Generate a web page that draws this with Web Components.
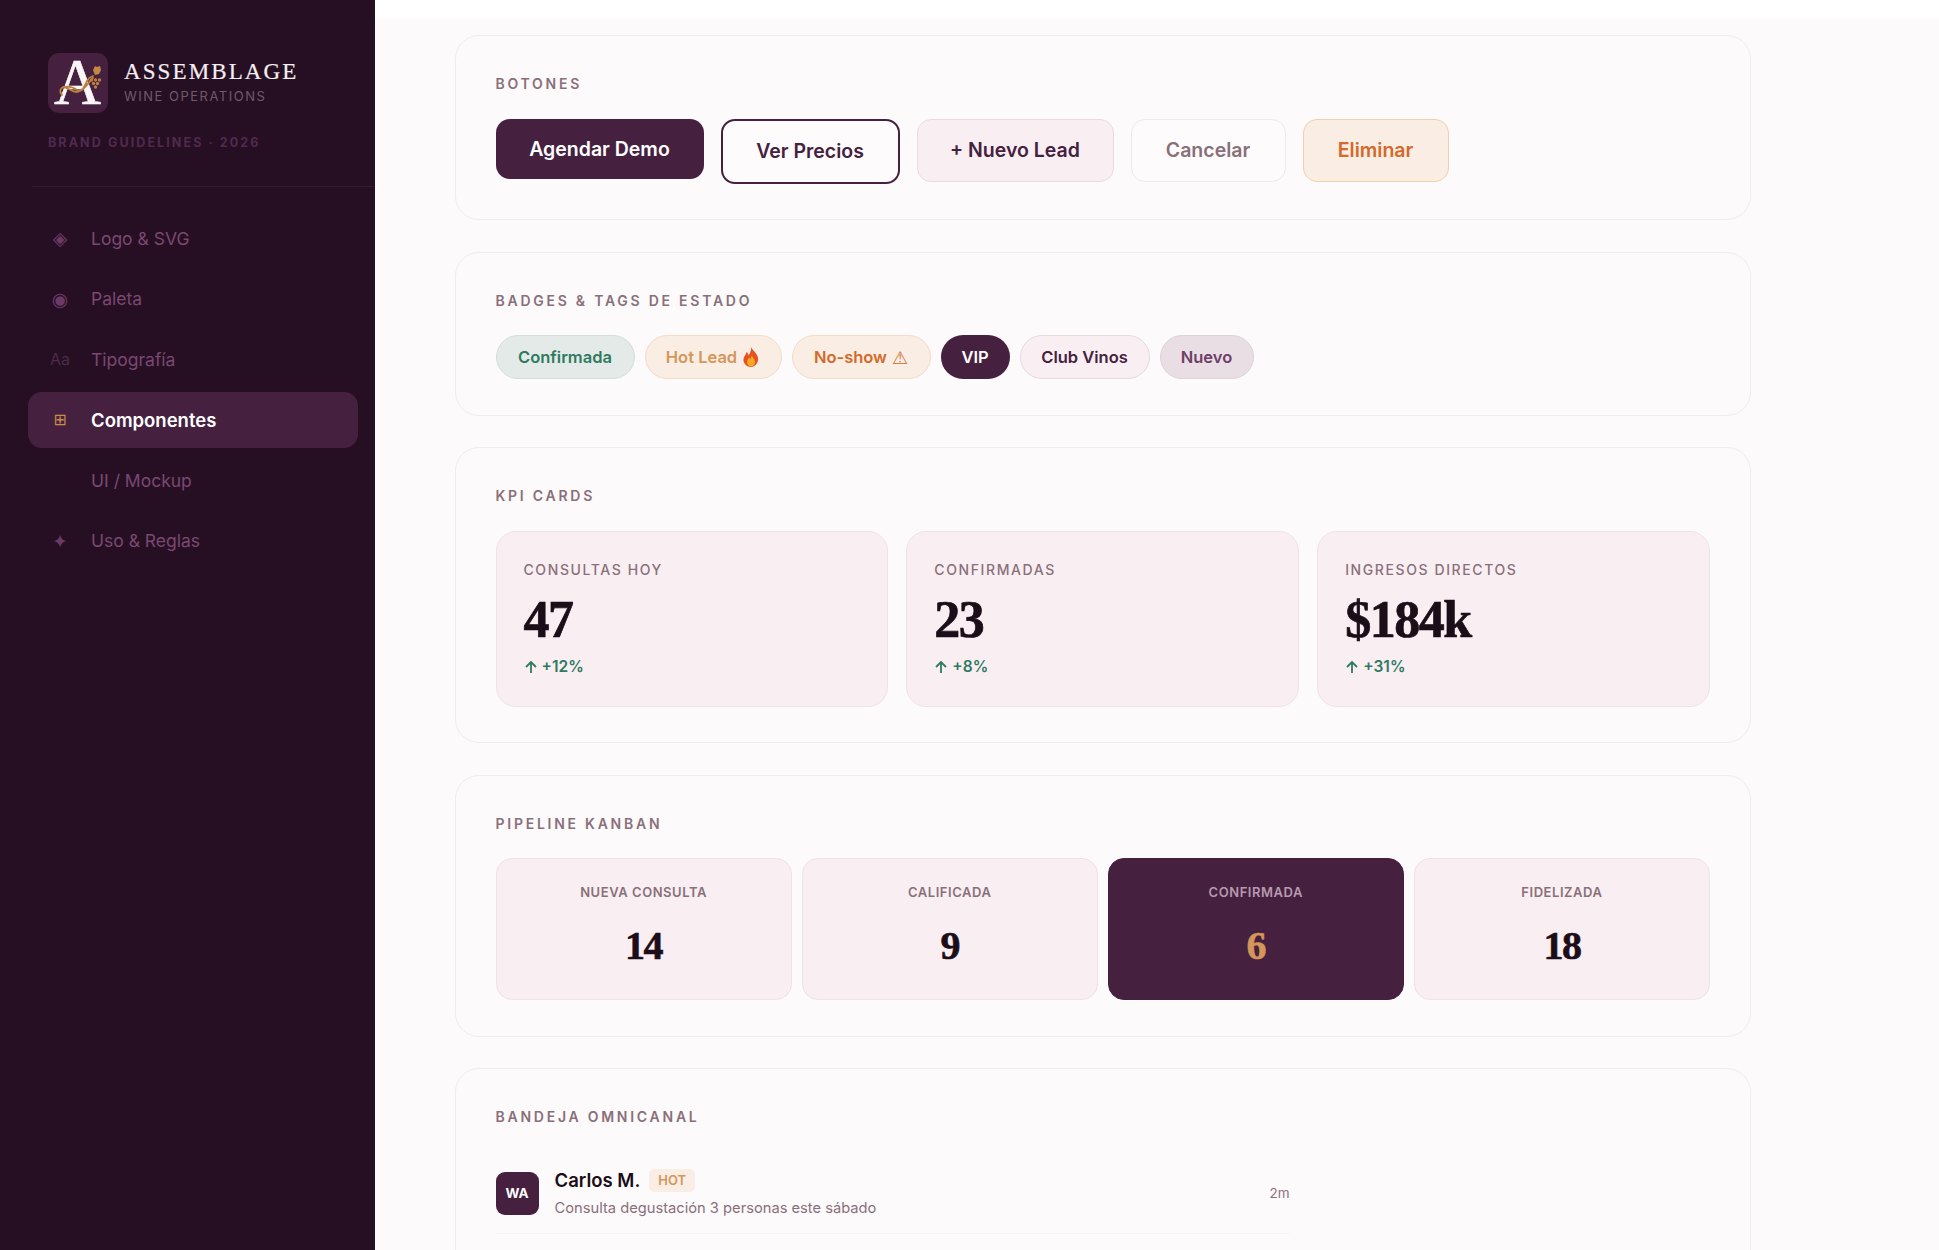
<!DOCTYPE html>
<html lang="es">
<head>
<meta charset="utf-8">
<title>Assemblage Brand Guidelines</title>
<style>
  html, body { margin: 0; height: 100%; overflow: hidden; }
  body {
    font-family: "Inter", "Liberation Sans", sans-serif;
    --plum: #45213f;
    --plum-dark: #260f22;
    --ink: #1c0e18;
    --muted: #8a6f7a;
    --blush: #f9eff3;
    --blush-line: #f0e2e8;
    --paper: #fcfafb;
    --line: #f1ecef;
    --green: #2f7a5f;
    --amber: #d4965a;
    --orange: #d4692a;
    --orange-bg: #f9ede4;
    --orange-line: #f5dcc6;
  }
  ds-app { height: 1250px; }
</style>
</head>
<body>

<ds-app>
  <ds-sidebar slot="side">
    <ds-nav-item icon="◈">Logo &amp; SVG</ds-nav-item>
    <ds-nav-item icon="◉">Paleta</ds-nav-item>
    <ds-nav-item icon="Aa" small>Tipografía</ds-nav-item>
    <ds-nav-item icon="⊞" active>Componentes</ds-nav-item>
    <ds-nav-item>UI / Mockup</ds-nav-item>
    <ds-nav-item icon="✦">Uso &amp; Reglas</ds-nav-item>
  </ds-sidebar>

  <ds-card label="Botones">
    <ds-row gap="17">
      <ds-button kind="primary">Agendar Demo</ds-button>
      <ds-button kind="outline">Ver Precios</ds-button>
      <ds-button kind="soft">+ Nuevo Lead</ds-button>
      <ds-button kind="ghost">Cancelar</ds-button>
      <ds-button kind="danger">Eliminar</ds-button>
    </ds-row>
  </ds-card>

  <ds-card label="Badges &amp; Tags de Estado">
    <ds-row gap="10">
      <ds-badge kind="green">Confirmada</ds-badge>
      <ds-badge kind="hot">Hot Lead <svg width="18" height="20" viewBox="0 0 18 20"><path fill="#e8501f" d="M9 0c1 3 6 6 7 11 .7 4.600-3 9-7 9s-8-3.500-7.500-8C2 9 4 8 4.500 5c1.500 1 2 2.500 2 3.500C8 6.500 9.500 3.500 9 0z"/><path fill="#f7a823" d="M9.500 8c.5 2 3.500 4 3.500 7 0 2.500-2 4.500-4 4.500S5 17.500 5 15c0-2 1.500-3 2-4.500 .7.500 1 1 1.200 1.800C9 11 9.700 9.500 9.500 8z"/></svg></ds-badge>
      <ds-badge kind="orange">No-show <span class="warn">⚠</span></ds-badge>
      <ds-badge kind="vip">VIP</ds-badge>
      <ds-badge kind="club">Club Vinos</ds-badge>
      <ds-badge kind="new">Nuevo</ds-badge>
    </ds-row>
  </ds-card>

  <ds-card label="KPI Cards">
    <ds-row gap="18">
      <ds-kpi label="Consultas Hoy" value="47" delta="+12%"></ds-kpi>
      <ds-kpi label="Confirmadas" value="23" delta="+8%"></ds-kpi>
      <ds-kpi label="Ingresos Directos" value="$184k" delta="+31%"></ds-kpi>
    </ds-row>
  </ds-card>

  <ds-card label="Pipeline Kanban">
    <ds-row gap="10">
      <ds-stage label="Nueva Consulta" value="14"></ds-stage>
      <ds-stage label="Calificada" value="9"></ds-stage>
      <ds-stage label="Confirmada" value="6" active></ds-stage>
      <ds-stage label="Fidelizada" value="18"></ds-stage>
    </ds-row>
  </ds-card>

  <ds-card label="Bandeja Omnicanal">
    <ds-inbox-row channel="WA" name="Carlos M." tag="HOT" time="2m">Consulta degustación 3 personas este sábado</ds-inbox-row>
  </ds-card>
</ds-app>

<script>
  // small helper, every element gets an open shadow root from a css + html string
  function shadow(el, css, html) {
    el.attachShadow({mode: 'open'}).innerHTML = '<style>' + css + '</style>' + html;
  }

  class DsApp extends HTMLElement {
    connectedCallback() {
      shadow(this, `
        :host { display: grid; grid-template-columns: 375px 1fr; }
        main { background: var(--paper); height: 1250px; overflow: hidden; }
        .strip { height: 18px; background: #fff; }
        .content { width: 1296px; margin-left: 80px; padding-top: 17px; display: flex; flex-direction: column; gap: 31.500px; }
      `, `
        <slot name="side"></slot>
        <main><div class="strip"></div><div class="content"><slot></slot></div></main>
      `);
    }
  }

  class DsSidebar extends HTMLElement {
    connectedCallback() {
      shadow(this, `
        :host { display: block; background: var(--plum-dark); height: 1250px; box-sizing: border-box; padding-top: 53px; }
        .brand { display: flex; gap: 16px; margin-left: 48px; }
        .name { font: 500 23px/1 "Liberation Serif", serif; letter-spacing: 2.100px; color: #f5eef2; margin-top: 7px; -webkit-text-stroke: .2px #f5eef2; }
        .sub { font-size: 13px; letter-spacing: 1.500px; color: #6f5a6c; margin-top: 4px; line-height: 18px; white-space: nowrap; }
        .year { margin: 21px 0 0 48px; font-size: 12.500px; font-weight: 700; letter-spacing: 2.100px; color: #52294f; line-height: 18px; }
        hr { border: 0; height: 1px; background: #36192f; margin: 34px 0 0 32px; }
        nav { margin: 23px 17px 0 28px; display: flex; flex-direction: column; gap: 4.500px; }
        svg { display: block; overflow: visible; }
      `, `
        <div class="brand">
          <svg width="60" height="60" viewBox="0 0 60 60">
            <rect width="60" height="60" rx="11" fill="#45213f"/>
            <text x="29.500" y="50.500" text-anchor="middle" font-family="Liberation Serif" font-size="65" fill="#fbf7f9" stroke="#fbf7f9" stroke-width=".6">A</text>
            <path d="M14 42c-3-4-2-7 2-8 4-1 9 0 13 3 5 3 7-3 10-9 1-2 3-4 6-5M15 34c4 0 7 4 13 5 6 0 8-4 11-7 2-3 4-5 6-7" fill="none" stroke="#bb8040" stroke-width="1.800" stroke-linecap="round"/>
            <path d="M45 17l2-4 2 1 3-1 1 4-2 4-4 1z" fill="#c08a45"/>
            <g fill="#bb8040"><circle cx="43.500" cy="27" r="1.700"/><circle cx="47.500" cy="27" r="1.700"/><circle cx="51.500" cy="27" r="1.700"/><circle cx="45.500" cy="30.500" r="1.700"/><circle cx="49.500" cy="30.500" r="1.700"/><circle cx="47.500" cy="34" r="1.700"/></g>
          </svg>
          <div>
            <div class="name">ASSEMBLAGE</div>
            <div class="sub">WINE OPERATIONS</div>
          </div>
        </div>
        <div class="year">BRAND GUIDELINES · 2026</div>
        <hr>
        <nav><slot></slot></nav>
      `);
    }
  }

  class DsNavItem extends HTMLElement {
    connectedCallback() {
      let icon = this.getAttribute('icon') || '';
      shadow(this, `
        :host { display: flex; align-items: center; height: 56px; border-radius: 14px; font-size: 17.500px; color: #7a4872; padding-left: 20px; }
        .icon { width: 24px; margin-right: 19px; text-align: center; font-family: "DejaVu Sans", sans-serif; font-size: 19px; line-height: 24px; color: #6b3a66; }
        :host([small]) .icon { font-family: "Inter", sans-serif; font-size: 16px; color: #4e2a4c; }
        :host([active]) { background: var(--plum); color: #fff; font-weight: 600; font-size: 18.500px; }
        :host([active]) .icon { color: #c98a4b; font-weight: 400; font-size: 16px; }
      `, `<span class="icon">${icon}</span><slot></slot>`);
    }
  }

  class DsCard extends HTMLElement {
    connectedCallback() {
      shadow(this, `
        :host { display: block; background: var(--paper); border: 1.500px solid var(--line); border-radius: 24px; padding: 38px 40px 35.500px 39.500px; }
        h3 { margin: 0 0 24.500px; font-size: 14px; line-height: 20px; font-weight: 600; letter-spacing: 2.750px; text-transform: uppercase; color: var(--muted); }
      `, `<h3>${this.getAttribute('label').replace('&', '&amp;')}</h3><slot></slot>`);
    }
  }

  class DsRow extends HTMLElement {
    connectedCallback() {
      shadow(this, `
        :host { display: flex; align-items: flex-start; gap: ${this.getAttribute('gap')}px; }
      `, `<slot></slot>`);
    }
  }

  class DsButton extends HTMLElement {
    connectedCallback() {
      shadow(this, `
        :host { display: flex; align-items: center; justify-content: center; box-sizing: border-box; border-radius: 14px; font-size: 19.500px; font-weight: 600; border: 1.500px solid transparent; white-space: nowrap; }
        :host([kind=primary]) { width: 208px; height: 60px; background: var(--plum); color: #fff; }
        :host([kind=outline]) { width: 179px; height: 65px; background: #fdfbfc; color: var(--plum); border: 2.500px solid var(--plum); }
        :host([kind=soft]) { width: 197px; height: 63px; background: var(--blush); color: var(--plum); border-color: #e9dbe1; }
        :host([kind=ghost]) { width: 155px; height: 63px; background: #fdfbfc; color: #8a6f7a; border-color: #f0e8ec; }
        :host([kind=danger]) { width: 146px; height: 63px; background: var(--orange-bg); color: var(--orange); border-color: #f3cfaf; }
      `, `<slot></slot>`);
    }
  }

  class DsBadge extends HTMLElement {
    connectedCallback() {
      shadow(this, `
        :host { display: inline-flex; align-items: center; justify-content: center; gap: 5px; box-sizing: border-box; height: 44px; border-radius: 23px; border: 1.500px solid transparent; font-size: 16.500px; font-weight: 600; white-space: nowrap; }
        :host([kind=green]) { width: 139px; background: #e3eae7; color: var(--green); border-color: #d3dfdb; }
        :host([kind=hot]) { width: 137px; background: var(--orange-bg); color: var(--amber); border-color: var(--orange-line); }
        :host([kind=orange]) { width: 139px; background: var(--orange-bg); color: var(--orange); border-color: var(--orange-line); }
        :host([kind=vip]) { width: 69px; background: var(--plum); color: #fff; }
        :host([kind=club]) { width: 130px; background: var(--blush); color: var(--plum); border-color: #e6d9e0; }
        :host([kind=new]) { width: 94px; background: #e8dee4; color: #6e3f68; border-color: #dfd2da; }
        ::slotted(.warn) { font-family: "DejaVu Sans", sans-serif; font-weight: 400; font-size: 18px; }
      `, `<slot></slot>`);
    }
  }

  class DsKpi extends HTMLElement {
    connectedCallback() {
      shadow(this, `
        :host { flex: 1; box-sizing: border-box; display: block; height: 176px; background: var(--blush); border: 1.500px solid var(--blush-line); border-radius: 20px; padding: 28px 27px 0; }
        .label { font-size: 14px; line-height: 20px; font-weight: 500; letter-spacing: 1.600px; text-transform: uppercase; color: var(--muted); }
        .value { font: 700 52px/60px "Liberation Serif", serif; letter-spacing: -1.500px; -webkit-text-stroke: .7px var(--ink); color: var(--ink); margin-top: 10px; }
        .delta { display: flex; align-items: center; gap: 4px; font-size: 15.500px; font-weight: 600; line-height: 20px; color: var(--green); margin-top: 7px; }
      `, `
        <div class="label">${this.getAttribute('label')}</div>
        <div class="value">${this.getAttribute('value')}</div>
        <div class="delta"><svg width="14" height="14" viewBox="0 0 14 14" fill="none" stroke="currentColor" stroke-width="1.800"><path d="M7 13V2M2 7l5-5 5 5"/></svg>${this.getAttribute('delta')}</div>
      `);
    }
  }

  class DsStage extends HTMLElement {
    connectedCallback() {
      shadow(this, `
        :host { flex: 1; box-sizing: border-box; display: block; height: 142px; background: var(--blush); border: 1.500px solid var(--blush-line); border-radius: 16px; padding-top: 24px; text-align: center; }
        .label { font-size: 13px; line-height: 18px; font-weight: 600; letter-spacing: .550px; text-transform: uppercase; color: var(--muted); }
        .value { --c: var(--ink); font: 700 40px/48px "Liberation Serif", serif; letter-spacing: -1.500px; -webkit-text-stroke: .6px var(--c); color: var(--c); margin-top: 21px; }
        :host([active]) { background: var(--plum); border-color: var(--plum); }
        :host([active]) .label { color: #b79ab0; }
        :host([active]) .value { --c: var(--amber); }
      `, `
        <div class="label">${this.getAttribute('label')}</div>
        <div class="value">${this.getAttribute('value')}</div>
      `);
    }
  }

  class DsInboxRow extends HTMLElement {
    connectedCallback() {
      shadow(this, `
        :host { display: flex; align-items: center; width: 794px; gap: 16px; margin: 41px 0 90px; padding-bottom: 15px; border-bottom: 1px solid #f8f4f6; }
        .avatar { width: 43px; height: 43px; border-radius: 9px; background: var(--plum); color: #fff; font-size: 13.500px; font-weight: 700; display: flex; align-items: center; justify-content: center; flex: none; }
        .body { flex: 1; }
        .top { display: flex; align-items: center; gap: 9px; height: 24px; }
        .name { font-size: 18.500px; font-weight: 600; color: var(--ink); }
        .tag { font-size: 13px; font-weight: 600; color: var(--amber); background: var(--orange-bg); border-radius: 5px; padding: 3px 9px; line-height: 17px; }
        .msg { font-size: 14.700px; color: var(--muted); line-height: 20px; margin-top: 6px; }
        .time { font-size: 13.500px; color: var(--muted); }
      `, `
        <div class="avatar">${this.getAttribute('channel')}</div>
        <div class="body">
          <div class="top"><span class="name">${this.getAttribute('name')}</span><span class="tag">${this.getAttribute('tag')}</span></div>
          <div class="msg"><slot></slot></div>
        </div>
        <div class="time">${this.getAttribute('time')}</div>
      `);
    }
  }

  customElements.define('ds-app', DsApp);
  customElements.define('ds-sidebar', DsSidebar);
  customElements.define('ds-nav-item', DsNavItem);
  customElements.define('ds-card', DsCard);
  customElements.define('ds-row', DsRow);
  customElements.define('ds-button', DsButton);
  customElements.define('ds-badge', DsBadge);
  customElements.define('ds-kpi', DsKpi);
  customElements.define('ds-stage', DsStage);
  customElements.define('ds-inbox-row', DsInboxRow);
</script>
</body>
</html>
